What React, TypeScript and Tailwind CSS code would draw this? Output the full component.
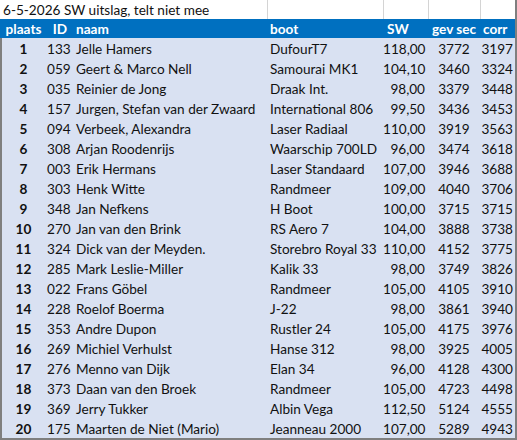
const rows: [number, string, string, string, string, number, number][] = [
  [1, "133", "Jelle Hamers", "DufourT7", "118,00", 3772, 3197],
  [2, "059", "Geert & Marco Nell", "Samourai MK1", "104,10", 3460, 3324],
  [3, "035", "Reinier de Jong", "Draak Int.", "98,00", 3379, 3448],
  [4, "157", "Jurgen, Stefan van der Zwaard", "International 806", "99,50", 3436, 3453],
  [5, "094", "Verbeek, Alexandra", "Laser Radiaal", "110,00", 3919, 3563],
  [6, "308", "Arjan Roodenrijs", "Waarschip 700LD", "96,00", 3474, 3618],
  [7, "003", "Erik Hermans", "Laser Standaard", "107,00", 3946, 3688],
  [8, "303", "Henk Witte", "Randmeer", "109,00", 4040, 3706],
  [9, "348", "Jan Nefkens", "H Boot", "100,00", 3715, 3715],
  [10, "270", "Jan van den Brink", "RS Aero 7", "104,00", 3888, 3738],
  [11, "324", "Dick van der Meyden.", "Storebro Royal 33", "110,00", 4152, 3775],
  [12, "285", "Mark Leslie-Miller", "Kalik 33", "98,00", 3749, 3826],
  [13, "022", "Frans Göbel", "Randmeer", "105,00", 4105, 3910],
  [14, "228", "Roelof Boerma", "J-22", "98,00", 3861, 3940],
  [15, "353", "Andre Dupon", "Rustler 24", "105,00", 4175, 3976],
  [16, "269", "Michiel Verhulst", "Hanse 312", "98,00", 3925, 4005],
  [17, "276", "Menno van Dijk", "Elan 34", "96,00", 4128, 4300],
  [18, "373", "Daan van den Broek", "Randmeer", "105,00", 4723, 4498],
  [19, "369", "Jerry Tukker", "Albin Vega", "112,50", 5124, 4555],
  [20, "175", "Maarten de Niet (Mario)", "Jeanneau 2000", "107,00", 5289, 4943],
];

const cols = "grid grid-cols-[47px_26px_194px_116px_45px_52px_35px]";

export default function App() {
  return (
    <div
      className="w-[517px] h-[440px] bg-white text-[13.6px] text-[#111] border-r-2 border-b-2 border-[#7f7f7f] overflow-hidden"
      style={{ fontFamily: '"Lato", "Liberation Sans", sans-serif' }}
    >
      {/* titel */}
      <div className={`${cols} h-[19px] leading-[17px]`}>
        <div className="col-span-3 pl-[3px] pt-[2px] whitespace-nowrap">6-5-2026 SW uitslag, telt niet mee</div>
        <div className="border-l border-[#d4d4d4]" />
        <div className="border-l border-[#d4d4d4]" />
        <div className="border-l border-[#d4d4d4]" />
        <div className="border-l border-[#d4d4d4]" />
      </div>

      {/* kop */}
      <div className={`${cols} h-[19px] leading-[17px] pt-[2px] bg-[#0070c0] text-white font-bold`}>
        <div className="text-center">plaats</div>
        <div className="text-center">ID</div>
        <div className="pl-[3px]">naam</div>
        <div className="pl-[3px]">boot</div>
        <div className="pl-[4px]">SW</div>
        <div className="pl-[4px] whitespace-nowrap">gev sec</div>
        <div className="pl-[3px]">corr</div>
      </div>

      <div className="bg-[#d9e1f2] border-l-2 border-[#7f7f7f] h-[400px]">
        {rows.map(([p, id, naam, boot, sw, gev, corr]) => (
          <div key={p} className={`${cols} h-[20px] leading-[17px] pt-[3px] -ml-[2px]`}>
            <div className="text-center font-bold">{p}</div>
            <div className="text-right pr-[3px]">{id}</div>
            <div className="pl-[3px] whitespace-nowrap">{naam}</div>
            <div className="pl-[3px] whitespace-nowrap">{boot}</div>
            <div className="text-right pr-[3px]">{sw}</div>
            <div className="text-center">{gev}</div>
            <div className="text-right pr-[2px]">{corr}</div>
          </div>
        ))}
      </div>
    </div>
  );
}
